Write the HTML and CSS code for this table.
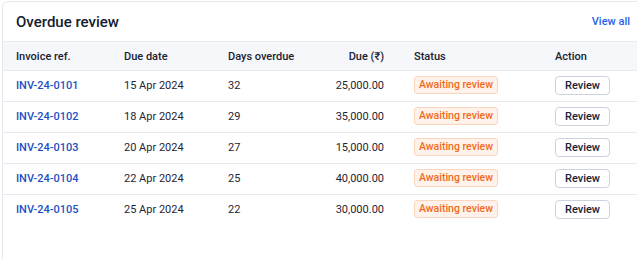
FILE: index.html
```html
<!DOCTYPE html>
<html>
<head>
<meta charset="utf-8">
<link rel="stylesheet" href="styles.css">
</head>
<body>
<div class="card">
  <div class="card-head">
    <h2 class="title">Overdue review</h2>
    <a class="view-all" href="#">View all</a>
  </div>
  <table class="tbl">
    <colgroup>
      <col class="c1"><col class="c2"><col class="c3"><col class="c4"><col class="c5"><col class="c6">
    </colgroup>
    <thead>
      <tr>
        <th class="first">Invoice ref.</th>
        <th>Due date</th>
        <th>Days overdue</th>
        <th class="num">Due (₹)</th>
        <th class="status">Status</th>
        <th>Action</th>
      </tr>
    </thead>
    <tbody>
      <tr>
        <td class="first"><a class="ref" href="#">INV-24-0101</a></td>
        <td>15 Apr 2024</td><td>32</td><td class="num">25,000.00</td>
        <td class="status"><span class="badge">Awaiting review</span></td>
        <td><button class="btn">Review</button></td>
      </tr>
      <tr>
        <td class="first"><a class="ref" href="#">INV-24-0102</a></td>
        <td>18 Apr 2024</td><td>29</td><td class="num">35,000.00</td>
        <td class="status"><span class="badge">Awaiting review</span></td>
        <td><button class="btn">Review</button></td>
      </tr>
      <tr>
        <td class="first"><a class="ref" href="#">INV-24-0103</a></td>
        <td>20 Apr 2024</td><td>27</td><td class="num">15,000.00</td>
        <td class="status"><span class="badge">Awaiting review</span></td>
        <td><button class="btn">Review</button></td>
      </tr>
      <tr>
        <td class="first"><a class="ref" href="#">INV-24-0104</a></td>
        <td>22 Apr 2024</td><td>25</td><td class="num">40,000.00</td>
        <td class="status"><span class="badge">Awaiting review</span></td>
        <td><button class="btn">Review</button></td>
      </tr>
      <tr class="last">
        <td class="first"><a class="ref" href="#">INV-24-0105</a></td>
        <td>25 Apr 2024</td><td>22</td><td class="num">30,000.00</td>
        <td class="status"><span class="badge">Awaiting review</span></td>
        <td><button class="btn">Review</button></td>
      </tr>
    </tbody>
  </table>
</div>
</body>
</html>
```
FILE: styles.css
```css
html, body {
  margin: 0;
  padding: 0;
  background: #ffffff;
  overflow: hidden;
  width: 637px;
  height: 259px;
}
body {
  font-family: Roboto, "Noto Sans", sans-serif;
  color: #1f2937;
}
.card {
  margin: 1px 0 0 2px;
  width: 643px;
  height: 258px;
  border: 1px solid #e3e7ee;
  border-bottom: none;
  border-radius: 6px 6px 0 0;
  background: #ffffff;
  box-sizing: border-box;
  overflow: hidden;
}
.card-head {
  height: 40px;
  display: flex;
  align-items: center;
  justify-content: space-between;
  padding: 0 14px 0 13px;
  border-bottom: 1px solid #e8ecf2;
  box-sizing: border-box;
}
.title {
  margin: 0;
  font-size: 15px;
  font-weight: 500;
  color: #141c2e;
}
.view-all {
  color: #2563eb;
  font-size: 11px;
  font-weight: 500;
  text-decoration: none;
}
.tbl {
  border-collapse: collapse;
  table-layout: fixed;
  width: 641px;
  font-size: 11px;
}
.c1 { width: 121px; }
.c2 { width: 104px; }
.c3 { width: 72px; }
.c4 { width: 84px; }
.c5 { width: 171px; }
.c6 { width: 89px; }
thead tr {
  background: #f5f7fa;
}
th {
  height: 28px;
  text-align: left;
  font-weight: 500;
  color: #1a2233;
  padding: 0;
  white-space: nowrap;
  border-bottom: 1px solid #e6eaf0;
}
td {
  padding: 0 0 2px 0;
  height: 28px;
  color: #1f2533;
  white-space: nowrap;
  border-bottom: 1px solid #e6eaf0;
}
tr.last td { border-bottom: none; }
td.first, th.first { padding-left: 13px; }
.num { text-align: right; }
td.status, th.status { padding-left: 30px; }
.ref {
  color: #1d4fc4;
  font-weight: 500;
  text-decoration: none;
}
.badge {
  display: inline-block;
  padding: 0 4px;
  height: 16px;
  line-height: 16px;
  border: 1px solid #fbd6bf;
  background: #fff2ea;
  color: #f26a1b;
  border-radius: 3px;
  font-size: 10.5px;
  font-weight: 500;
}
.btn {
  font-family: inherit;
  font-size: 11px;
  font-weight: 500;
  color: #1a2233;
  background: #ffffff;
  border: 1px solid #cdd3dc;
  border-radius: 4px;
  width: 55px;
  height: 19px;
  padding: 0;
}
```
